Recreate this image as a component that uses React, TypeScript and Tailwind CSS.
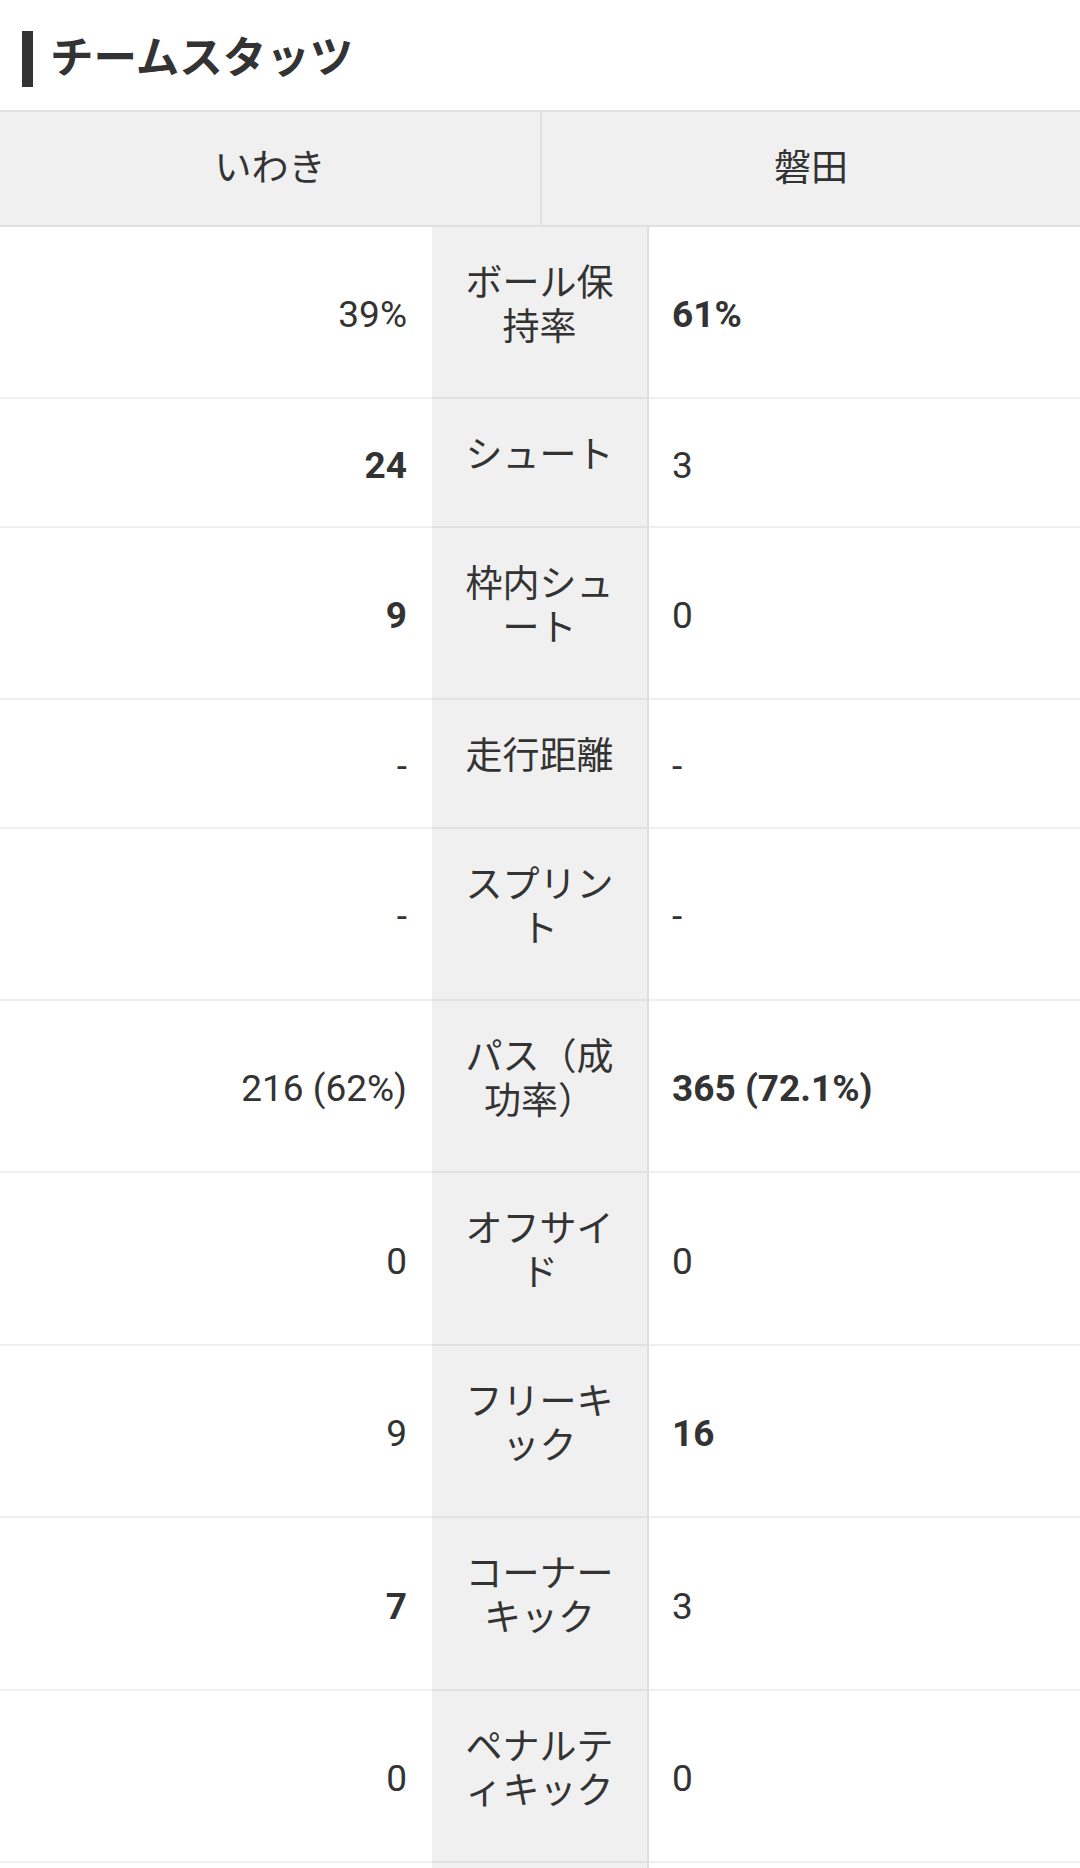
import React from 'react';

interface StatRow {
  label: string;
  home: string;
  away: string;
  winner?: 'home' | 'away';
}

const stats: StatRow[] = [
  { label: 'ボール保持率', home: '39%', away: '61%', winner: 'away' },
  { label: 'シュート', home: '24', away: '3', winner: 'home' },
  { label: '枠内シュート', home: '9', away: '0', winner: 'home' },
  { label: '走行距離', home: '-', away: '-' },
  { label: 'スプリント', home: '-', away: '-' },
  { label: 'パス（成功率）', home: '216 (62%)', away: '365 (72.1%)', winner: 'away' },
  { label: 'オフサイド', home: '0', away: '0' },
  { label: 'フリーキック', home: '9', away: '16', winner: 'away' },
  { label: 'コーナーキック', home: '7', away: '3', winner: 'home' },
  { label: 'ペナルティキック', home: '0', away: '0' },
  { label: 'イエローカード', home: '1', away: '2', winner: 'away' },
];

const font = { fontFamily: 'Roboto, "Noto Sans CJK JP", sans-serif' };

const App: React.FC = () => {
  return (
    <div className="w-[1080px] bg-white text-[#333]" style={font}>
      {/* 見出し */}
      <div className="flex h-[110px] items-center pl-[22px] pt-[8px]">
        <span className="h-[56px] w-[11px] bg-[#333]" />
        <h2 className="pl-[17px] text-[43.5px] font-bold leading-none">チームスタッツ</h2>
      </div>

      {/* チーム名 */}
      <div className="grid h-[117px] grid-cols-2 border-y-2 border-[#e0e0e0] bg-[#f0f0f0] text-[37px]">
        <div className="flex items-center justify-center">いわき</div>
        <div className="flex items-center justify-center border-l-2 border-[#e0e0e0]">磐田</div>
      </div>

      <table className="w-full table-fixed border-collapse">
        <colgroup>
          <col className="w-[432px]" />
          <col className="w-[216px]" />
          <col className="w-[432px]" />
        </colgroup>
        <tbody>
          {stats.map(row => (
            <tr key={row.label}>
              <td
                className={`border-b-2 border-[#efefef] pt-[6px] pr-[25px] text-right align-middle text-[37px] ${
                  row.winner === 'home' ? 'font-bold' : ''
                }`}
              >
                {row.home}
              </td>
              <td className="border-b-2 border-r-2 border-b-[#e2e2e2] border-r-[#dedede] bg-[#f0f0f0] px-[30px] pt-[35px] pb-[47.4px] text-center align-middle text-[37px] leading-[44px]">
                {row.label}
              </td>
              <td
                className={`border-b-2 border-[#efefef] pt-[6px] pl-[23px] text-left align-middle text-[37px] ${
                  row.winner === 'away' ? 'font-bold' : ''
                }`}
              >
                {row.away}
              </td>
            </tr>
          ))}
        </tbody>
      </table>
    </div>
  );
};

export default App;
